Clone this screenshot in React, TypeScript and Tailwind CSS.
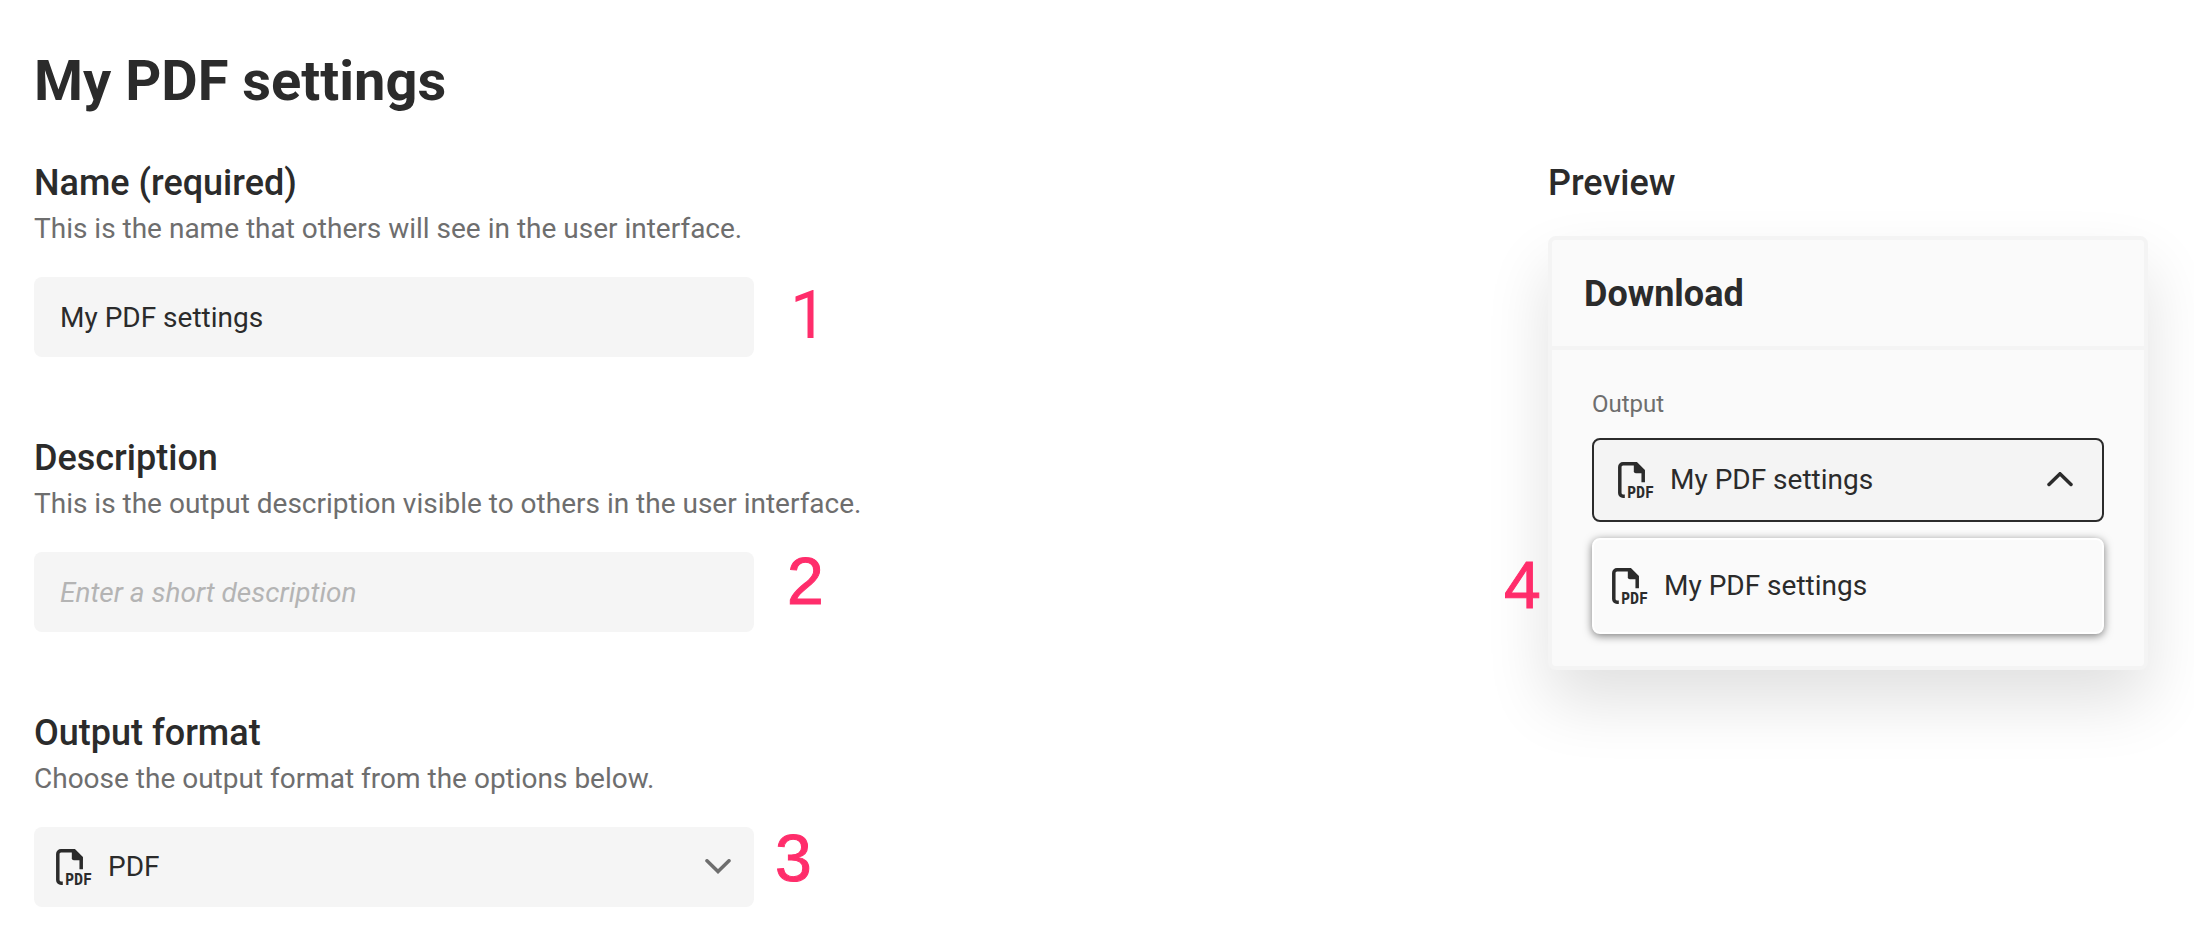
import { useState } from "react";
import type { ReactNode } from "react";

function PdfIcon({ className = "" }: { className?: string }) {
  return (
    <svg viewBox="0 0 36 36" className={`h-9 w-9 shrink-0 overflow-visible ${className}`} aria-hidden="true">
      <path
        d="M6.800 34.300H5a3.200 3.200 0 0 1-3.200-3.200V5a3.200 3.200 0 0 1 3.200-3.200h13.200L25.200 8.800v11.400"
        fill="none"
        stroke="currentColor"
        strokeWidth="3.500"
      />
      <path d="M15.800 1h3l7.700 7.700v2.500h-8.700a2 2 0 0 1-2-2Z" fill="currentColor" />
      <text
        x="9"
        y="36"
        fill="currentColor"
        className="font-['DejaVu_Sans_Mono',monospace] text-[15px] font-bold"
      >
        PDF
      </text>
    </svg>
  );
}

function Chevron({ up = false, className = "" }: { up?: boolean; className?: string }) {
  return (
    <svg viewBox="0 0 28 16" className={`h-4 w-7 shrink-0 ${className}`} aria-hidden="true">
      <path
        d={up ? "M3 12.500 14 1.800l11 10.700" : "M3 1.800l11 10.700 11-10.700"}
        fill="none"
        stroke="currentColor"
        strokeWidth="3.500"
        strokeLinecap="round"
      />
    </svg>
  );
}

function Marker({ className, children }: { className: string; children: ReactNode }) {
  return (
    <span className={`absolute text-[66px] leading-none text-[#ff2d6b] ${className}`}>
      {children}
    </span>
  );
}

function Field({
  id,
  label,
  hint,
  children,
}: {
  id: string;
  label: string;
  hint: string;
  children: ReactNode;
}) {
  return (
    <div>
      <label htmlFor={id} className="block text-4xl/[42px] font-medium">
        {label}
      </label>
      <p id={`${id}-hint`} className="mt-1 text-[28px]/[42px] text-[#6e6e6e]">
        {hint}
      </p>
      <div className="relative mt-[27px] max-w-[720px]">{children}</div>
    </div>
  );
}

const control = "block h-20 w-full rounded-lg bg-[#f5f5f5] text-[28px] outline-none";
const digit = "font-['Liberation_Sans',Arial,sans-serif] [-webkit-text-stroke:1px_#ff2d6b]";

export default function App() {
  const [name, setName] = useState("My PDF settings");
  const [description, setDescription] = useState("");
  const [open, setOpen] = useState(true);

  return (
    <main className="bg-white pt-12 pr-[46px] pb-6 pl-[34px] font-[Roboto,sans-serif] text-[#2b2b2b]">
      <h1 className="text-[56px]/[66px] font-bold">My PDF settings</h1>

      <div className="mt-12 flex items-start justify-between gap-16">
        <form className="flex flex-1 flex-col gap-20">
          <Field
            id="name"
            label="Name (required)"
            hint="This is the name that others will see in the user interface."
          >
            <input
              id="name"
              required
              value={name}
              onChange={(e) => setName(e.target.value)}
              aria-describedby="name-hint"
              className={`${control} px-[26px]`}
            />
            <Marker className="top-1.5 left-[756px]">1</Marker>
          </Field>

          <Field
            id="description"
            label="Description"
            hint="This is the output description visible to others in the user interface."
          >
            <input
              id="description"
              value={description}
              onChange={(e) => setDescription(e.target.value)}
              placeholder="Enter a short description"
              aria-describedby="description-hint"
              className={`${control} px-[26px] placeholder:text-[#b4b4b4] placeholder:italic`}
            />
            <Marker className={`-top-1 left-[753px] ${digit}`}>2</Marker>
          </Field>

          <Field
            id="format"
            label="Output format"
            hint="Choose the output format from the options below."
          >
            <select
              id="format"
              aria-describedby="format-hint"
              className={`${control} appearance-none pr-16 pl-[74px]`}
            >
              <option>PDF</option>
            </select>
            <PdfIcon className="pointer-events-none absolute top-[22px] left-[22px]" />
            <Chevron className="pointer-events-none absolute top-8 right-[22px] text-[#6e6e6e]" />
            <Marker className={`-top-0.5 left-[741px] ${digit}`}>3</Marker>
          </Field>
        </form>

        <section className="w-[600px]">
          <h2 className="text-4xl/[42px] font-medium">Preview</h2>
          <div className="mt-8 rounded-lg border-4 border-[#f4f4f4] bg-[#fafafa] shadow-[0_32px_64px_rgba(0,0,0,0.12)]">
            <h3 className="border-b-4 border-[#f4f4f4] px-8 pt-8 pb-[30px] text-4xl/11 font-bold">
              Download
            </h3>
            <div className="px-10 pt-9 pb-8">
              <span id="output-label" className="block text-2xl/9 text-[#6e6e6e]">
                Output
              </span>
              <button
                type="button"
                aria-labelledby="output-label output-value"
                aria-haspopup="listbox"
                aria-expanded={open}
                onClick={() => setOpen(!open)}
                className="mt-4 flex h-[84px] w-full items-center gap-4 rounded-lg border-2 border-[#2b2b2b] bg-[#f4f4f4] pr-7 pl-6 text-left text-[28px]"
              >
                <PdfIcon />
                <span id="output-value" className="flex-1">
                  {name}
                </span>
                <Chevron up={open} />
              </button>
              <div className="relative mt-4 h-24">
                {open && (
                  <ul
                    role="listbox"
                    aria-labelledby="output-label"
                    className="rounded-lg border-2 border-white bg-[#fafafa] shadow-[0_2px_8px_rgba(0,0,0,0.5)]"
                  >
                    <li
                      role="option"
                      aria-selected="true"
                      className="flex h-[92px] items-center gap-4 px-[18px] text-[28px]"
                    >
                      <PdfIcon />
                      {name}
                    </li>
                  </ul>
                )}
                <Marker className={`top-3.5 -left-[88px] ${digit}`}>4</Marker>
              </div>
            </div>
          </div>
        </section>
      </div>
    </main>
  );
}
